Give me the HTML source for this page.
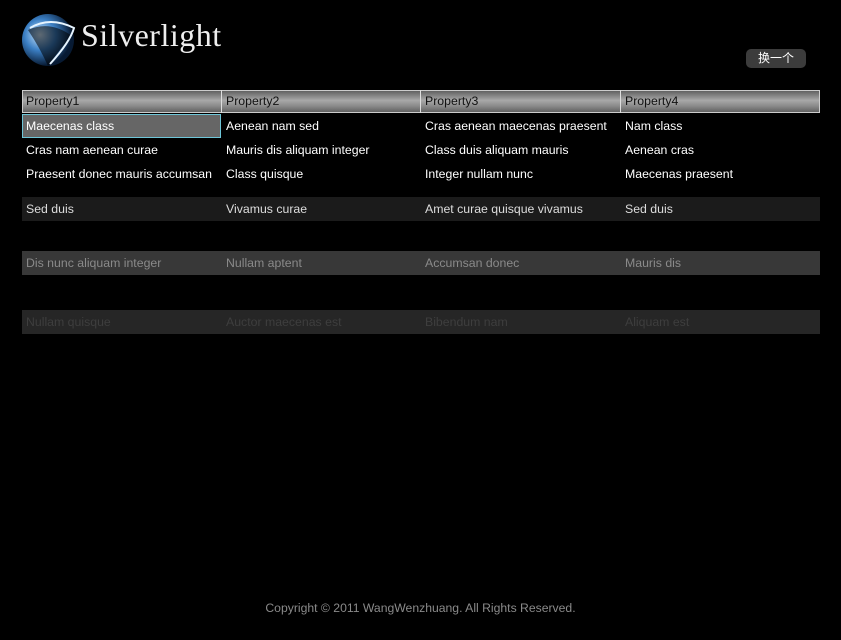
<!DOCTYPE html>
<html><head><meta charset="utf-8"><style>
body{margin:0;background:#000;width:841px;height:640px;position:relative;overflow:hidden;font-family:"Liberation Sans","Noto Sans CJK SC",sans-serif;font-size:12.3px}
.a{position:absolute}
.row{position:absolute;left:22px;width:798px;height:24px}
.c{position:absolute;top:0;line-height:24px;white-space:nowrap}
.hdr{position:absolute;left:22px;top:90px;width:798px;height:23px;background:linear-gradient(#5a5a5a,#a8a8a8 45%,#8a8a8a 70%,#5a5a5a);box-shadow:inset 0 0 0 1px #ccc}
.hdr .c{color:#111;line-height:23px}
.sep{position:absolute;top:0;width:1px;height:23px;background:#ddd}
</style></head><body>
<svg class="a" style="left:20px;top:8px" width="60" height="62" viewBox="0 0 60 62">
<defs><radialGradient id="g" cx="35%" cy="40%" r="60%"><stop offset="0" stop-color="#cfe9ff"/><stop offset=".5" stop-color="#3b7fc4"/><stop offset="1" stop-color="#071a33"/></radialGradient></defs>
<ellipse cx="28" cy="32" rx="26" ry="26" fill="url(#g)"/>
<path d="M8 22 Q30 12 52 28 Q40 40 28 58 Q20 40 8 22Z" fill="#000" opacity=".55"/>
<path d="M10 20 Q30 8 54 20 Q50 34 30 56" stroke="#e6f4ff" stroke-width="2" fill="none"/>
</svg>
<div class="a" style="left:81px;top:17px;color:#eee;font:32px 'Liberation Serif',serif;letter-spacing:0.5px">Silverlight</div>
<div class="a" style="left:746px;top:49px;width:60px;height:19px;border-radius:5px;background:#3c3c3c;color:#fff;text-align:center;line-height:19px;font-size:12px">换一个</div>
<div class="hdr"><div class="c" style="left:4px">Property1</div><div class="sep" style="left:199px"></div><div class="c" style="left:204px">Property2</div><div class="sep" style="left:398px"></div><div class="c" style="left:403px">Property3</div><div class="sep" style="left:598px"></div><div class="c" style="left:603px">Property4</div></div>
<div class="a" style="left:22px;top:114px;width:197px;height:22px;background:#666;border:1px solid #6ec6d8"></div>
<div class="row" style="top:114px;color:#fff"><div class="c" style="left:4px">Maecenas class</div><div class="c" style="left:204px">Aenean nam sed</div><div class="c" style="left:403px">Cras aenean maecenas praesent</div><div class="c" style="left:603px">Nam class</div></div>
<div class="row" style="top:138px;color:#fff"><div class="c" style="left:4px">Cras nam aenean curae</div><div class="c" style="left:204px">Mauris dis aliquam integer</div><div class="c" style="left:403px">Class duis aliquam mauris</div><div class="c" style="left:603px">Aenean cras</div></div>
<div class="row" style="top:162px;color:#fff"><div class="c" style="left:4px">Praesent donec mauris accumsan</div><div class="c" style="left:204px">Class quisque</div><div class="c" style="left:403px">Integer nullam nunc</div><div class="c" style="left:603px">Maecenas praesent</div></div>
<div class="row" style="top:197px;background:#1b1b1b;color:#ddd"><div class="c" style="left:4px">Sed duis</div><div class="c" style="left:204px">Vivamus curae</div><div class="c" style="left:403px">Amet curae quisque vivamus</div><div class="c" style="left:603px">Sed duis</div></div>
<div class="row" style="top:251px;background:#383838;color:#8a8a8a"><div class="c" style="left:4px">Dis nunc aliquam integer</div><div class="c" style="left:204px">Nullam aptent</div><div class="c" style="left:403px">Accumsan donec</div><div class="c" style="left:603px">Mauris dis</div></div>
<div class="row" style="top:310px;background:#262626;color:#3e3e3e"><div class="c" style="left:4px">Nullam quisque</div><div class="c" style="left:204px">Auctor maecenas est</div><div class="c" style="left:403px">Bibendum nam</div><div class="c" style="left:603px">Aliquam est</div></div>
<div class="a" style="left:0;width:841px;top:601px;text-align:center;color:#8a8a8a;font-size:12.2px">Copyright © 2011 WangWenzhuang. All Rights Reserved.</div>
</body></html>
